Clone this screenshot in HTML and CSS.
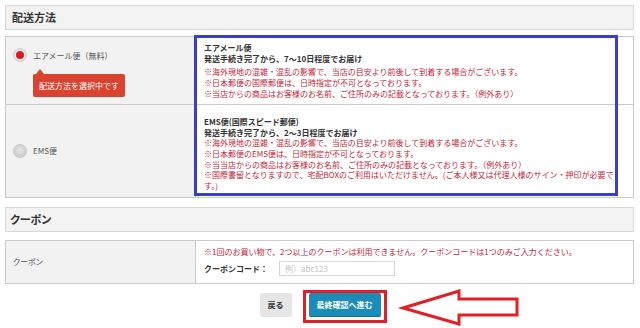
FILE: index.html
```html
<!DOCTYPE html>
<html lang="ja">
<head>
<meta charset="utf-8">
<title>配送方法</title>
<link rel="stylesheet" href="styles.css">
</head>
<body>
<div class="page">
  <div class="sec-head">配送方法</div>
  <div class="tbl ship">
    <div class="lc lc-top">
      <label class="opt"><span class="radio on"></span><span class="opt-label">エアメール便（無料）</span></label>
      <div class="tip">配送方法を選択中です</div>
    </div>
    <div class="rc rc-top">
      <div class="b">エアメール便<br>発送手続き完了から、7～10日程度でお届け</div>
      <div class="note">※海外現地の混雑・混乱の影響で、当店の目安より前後して到着する場合がございます。<br>※日本郵便の国際郵便は、日時指定が不可となっております。<br>※当店からの商品はお客様のお名前、ご住所のみの記載となっております。（例外あり）</div>
    </div>
    <div class="lc lc-bot">
      <label class="opt"><span class="radio"></span><span class="opt-label">EMS便</span></label>
    </div>
    <div class="rc rc-bot">
      <div class="b">EMS便(国際スピード郵便)<br>発送手続き完了から、2～3日程度でお届け</div>
      <div class="note">※海外現地の混雑・混乱の影響で、当店の目安より前後して到着する場合がございます。<br>※日本郵便のEMS便は、日時指定が不可となっております。<br>※当当店からの商品はお客様のお名前、ご住所のみの記載となっております。（例外あり）<br>※国際書留となりますので、宅配BOXのご利用はいただけません。(ご本人様又は代理人様のサイン・押印が必要で<br>す。)</div>
    </div>
  </div>

  <div class="sec-head sec-coupon">クーポン</div>
  <div class="tbl coupon">
    <div class="lc lc-coupon">クーポン</div>
    <div class="rc rc-coupon">
      <div class="note">※1回のお買い物で、2つ以上のクーポンは利用できません。クーポンコードは1つのみご入力ください。</div>
      <div class="code-row"><span class="code-label">クーポンコード：</span><input class="code-input" type="text" placeholder="例）abc123"></div>
    </div>
  </div>

  <div class="actions">
    <button class="btn btn-back">戻る</button>
    <button class="btn btn-next">最終確認へ進む</button>
  </div>

  <div class="mark-blue"></div>
  <div class="mark-red"></div>
  <svg class="arrow" width="640" height="328" viewBox="0 0 640 328">
    <polygon points="403,308 459,291 459,299 517,299 517,315 459,315 459,324" fill="none" stroke="#e31e24" stroke-width="3" stroke-linejoin="miter"/>
  </svg>
</div>
</body>
</html>
```

FILE: styles.css
```css
* { box-sizing: border-box; }
html, body { margin: 0; padding: 0; background: #fff; }
body {
  font-family: "Noto Sans CJK JP", "Noto Sans", sans-serif;
  font-size: 8px;
  line-height: 11px;
  color: #333;
}
.page {
  position: relative;
  width: 640px;
  height: 328px;
  padding: 5px 6px 0 5px;
  overflow: hidden;
}
.sec-head {
  height: 25px;
  border: 1px solid #d8d8d8;
  background: #f3f3f3;
  font-size: 11px;
  line-height: 23px;
  font-weight: bold;
  color: #333;
  padding-left: 6px;
  margin-bottom: 6px;
}
.sec-coupon {
  margin-top: 9px;
  margin-bottom: 8px;
  padding-left: 4px;
  font-feature-settings: "palt";
}
.tbl {
  display: grid;
  grid-template-columns: 190px 1fr;
  border: 1px solid #cbcbcb;
}
.lc {
  background: #f2f2f2;
  border-right: 1px solid #cbcbcb;
  color: #555;
}
.lc-top, .rc-top { border-bottom: 1px solid #cbcbcb; }
.lc-top {
  display: flex;
  flex-direction: column;
  align-items: flex-start;
  padding: 10px 0 0 7px;
}
.lc-bot {
  display: flex;
  align-items: center;
  padding-left: 7px;
}
.opt {
  display: flex;
  align-items: center;
  height: 16px;
}
.radio {
  width: 14px;
  height: 14px;
  border-radius: 50%;
  background: radial-gradient(circle at 50% 40%, #e4e4e4, #c4c4c4);
  border: 1px solid #c8c8c8;
  display: flex;
  align-items: center;
  justify-content: center;
  margin-right: 6px;
}
.radio.on { background: #f4f4f4; border-color: #cfcfcf; box-shadow: inset 0 0 1px #aaa; }
.radio.on::after {
  content: "";
  width: 8px;
  height: 8px;
  border-radius: 50%;
  background: #e0141e;
}
.opt-label { color: #555; }
.tip {
  position: relative;
  margin-top: 11px;
  margin-left: 20px;
  width: 92px;
  height: 23px;
  background: #d9432f;
  border-radius: 2px;
  color: #fff;
  line-height: 23px;
  padding-left: 6px;
}
.tip::before {
  content: "";
  position: absolute;
  left: 3px;
  top: -5px;
  border-left: 4px solid transparent;
  border-right: 4px solid transparent;
  border-bottom: 5px solid #d9432f;
}
.rc { padding: 5px 8px; background: #fff; }
.rc-bot { padding: 11px 8px 5px; }
.b { font-weight: bold; color: #333; margin-bottom: 2px; }
.rc-bot .b { margin-bottom: 0; }
.note { color: #c0283c; }
.rc-bot .note { line-height: 10.8px; }
.lc-coupon {
  display: flex;
  align-items: center;
  padding-left: 7px;
  font-feature-settings: "palt";
}
.rc-coupon { padding: 5px 8px 7px; }
.code-row {
  display: flex;
  align-items: center;
  margin-top: 4px;
}
.code-label { font-weight: bold; color: #333; width: 75px; }
.code-input {
  width: 116px;
  height: 15px;
  border: 1px solid #d6d6d6;
  padding: 0 0 0 5px;
  font-family: inherit;
  font-size: 8px;
  color: #333;
  outline: none;
}
.code-input::placeholder { color: #c4c4c4; }
.actions {
  display: flex;
  justify-content: center;
  gap: 17px;
  margin-top: 9px;
  padding-left: 1px;
}
.btn {
  height: 24px;
  border: none;
  border-radius: 2px;
  font-family: inherit;
  font-size: 8px;
  font-weight: bold;
  padding: 0;
  cursor: pointer;
}
.btn-back { width: 32px; background: #e6e6e6; color: #333; }
.btn-next { width: 72px; background: #1b8cb7; color: #fff; border-bottom: 1px solid #146c8e; }
.mark-blue {
  position: absolute;
  left: 194px;
  top: 35px;
  width: 424px;
  height: 161px;
  border: 3px solid #3a3ecb;
}
.mark-red {
  position: absolute;
  left: 303px;
  top: 290px;
  width: 84px;
  height: 33px;
  border: 3px solid #e31e24;
}
.arrow {
  position: absolute;
  left: 0;
  top: 0;
  pointer-events: none;
}
```
